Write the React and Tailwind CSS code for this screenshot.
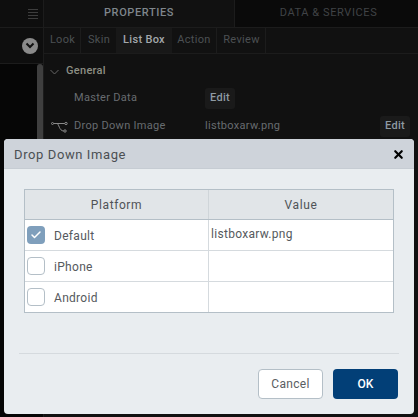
import { Check, X } from 'lucide-react';

const font = { fontFamily: 'Roboto, sans-serif' };

function Row({ label, value, checked, last }) {
  return (
    <div className={`grid grid-cols-[184px_1fr] bg-white ${last ? 'h-[30px]' : 'h-[31px] border-b border-[#d5dade]'}`}>
      <div className="flex items-center pl-[2px] border-r border-[#d5dade]">
        {checked ? (
          <span className="w-[18px] h-[18px] rounded-[4px] bg-[#7f9fbc] flex items-center justify-center">
            <Check className="w-3 h-3 text-white" strokeWidth={3} />
          </span>
        ) : (
          <span className="w-[18px] h-[18px] rounded-[4px] bg-white border border-[#b4bfc7]" />
        )}
        <span className="ml-[9px] pt-[1px] text-[12px] tracking-[0.3px] text-[#55595d]">{label}</span>
      </div>
      <div className="flex items-center pl-[2px] pb-[2px] text-[12px] tracking-[0.3px] text-[#55595d]">{value}</div>
    </div>
  );
}

export default function App() {
  return (
    <div style={font} className="relative w-[418px] h-[417px] overflow-hidden bg-[#111111] flex">
      {/* Left rail */}
      <div className="w-[44px] shrink-0 bg-[#060606] border-r border-[#1c1c1c] flex flex-col">
        <div className="h-[28px] shrink-0 flex items-center justify-end pr-[5px] bg-[#0e0e0e] border-b border-[#1c1c1c]">
          <div className="w-[10px] flex flex-col gap-[2px]">
            <span className="h-px bg-[#3d3d3d]" />
            <span className="h-px bg-[#3d3d3d]" />
            <span className="h-px bg-[#3d3d3d]" />
            <span className="h-px bg-[#3d3d3d]" />
          </div>
        </div>
        <div className="h-[36px] shrink-0 flex items-center justify-end pr-[5px] bg-[#0e0e0e] border-b border-[#1c1c1c]">
          <span className="w-4 h-4 rounded-full bg-[#8a8a8a] flex items-center justify-center">
            <svg width="10" height="7" viewBox="0 0 10 7"><path d="M1.5 1.5 5 5l3.5-3.5" fill="none" stroke="#111" strokeWidth="2" /></svg>
          </span>
        </div>
        <div className="flex justify-end">
          <span className="block w-[6px] h-[100px] rounded-t-[3px] bg-[#3f3f3f]" />
        </div>
      </div>

      {/* Properties panel */}
      <div className="flex-1 flex flex-col">
        <div className="flex h-[28px] border-b border-[#1c1c1c]">
          <div className="w-[190px] flex items-center justify-center text-[11px] font-medium tracking-[0.6px] text-[#7f868c]">PROPERTIES</div>
          <div className="flex-1 flex items-center justify-center pl-[4px] bg-[#0a0a0a] border-l border-[#1c1c1c] text-[11px] tracking-[0.6px] text-[#404346]">DATA &amp; SERVICES</div>
        </div>
        <div className="flex h-[26px] border-b border-[#1c1c1c] text-[11px] tracking-[0.3px] text-[#4c5053]">
          <div className="w-[37px] flex items-center justify-center pl-[1px] border-r border-[#1c1c1c]">Look</div>
          <div className="w-[35px] flex items-center justify-center pl-[1px]">Skin</div>
          <div className="w-[56px] flex items-center justify-center bg-[#181818] font-medium text-[#a3a8ac]">List Box</div>
          <div className="w-[45px] flex items-center justify-center border-r border-[#1c1c1c]">Action</div>
          <div className="w-[49px] flex items-center justify-center pl-[1px] border-r border-[#1c1c1c]">Review</div>
        </div>
        <div className="flex-1 text-[11px] tracking-[0.3px] text-[#686c70]">
          <div className="flex items-center h-[34px] pl-[6px] pt-[1px]">
            <svg width="9" height="6" viewBox="0 0 9 6"><path d="M.5 1 4.5 5l4-4" fill="none" stroke="#666" /></svg>
            <span className="ml-[7px] font-medium text-[#8d8f84]">General</span>
          </div>
          <div className="flex items-center h-[21px] pl-[30px]">
            <span className="w-[131px]">Master Data</span>
            <span className="h-[21px] px-[5px] rounded-[3px] bg-[#1a1a1a] flex items-center font-medium text-[#8f9ba3]">Edit</span>
          </div>
          <div className="flex items-center h-[21px] mt-[7px] pl-[7px]">
            <svg width="17" height="12" viewBox="0 0 17 12" fill="none" stroke="#8a8a8a" strokeWidth="1">
              <circle cx="1.5" cy="2.5" r="1" />
              <circle cx="15" cy="2.5" r="1.2" />
              <circle cx="14" cy="10" r="1.2" />
              <path d="M2.5 2.5H13.8M6 2.5c2 0 2 7.5 6.8 7.5" />
            </svg>
            <span className="ml-[6px] w-[131px]">Drop Down Image</span>
            <span className="w-[175px]">listboxarw.png</span>
            <span className="h-[21px] px-[5px] rounded-[3px] bg-[#1a1a1a] flex items-center font-medium text-[#8f9ba3]">Edit</span>
          </div>
        </div>
      </div>

      {/* Dialog */}
      <div className="absolute left-[4px] top-[139px] w-[410px] h-[275px] rounded-[4px] overflow-hidden bg-[#e9edf0] flex flex-col">
        <div className="h-[30px] shrink-0 flex items-center justify-between pl-[10px] pr-[9px] pt-[2px] bg-[#ced3da] border-b border-[#c6ccd3]">
          <span className="text-[13px] tracking-[0.6px] text-[#4b4f53]">Drop Down Image</span>
          <X className="w-[13px] h-[13px] text-black" strokeWidth={4} />
        </div>
        <div className="mt-[20px] mx-[20px] w-[370px] border border-[#b4bfc7]">
          <div className="grid grid-cols-[184px_1fr] h-[30px] bg-[#e1e5e8] border-b border-[#b4bfc7] text-[12px] tracking-[0.6px] text-[#4f5357]">
            <div className="flex items-center justify-center border-r border-[#cfd5d9]">Platform</div>
            <div className="flex items-center justify-center">Value</div>
          </div>
          <Row label="Default" value="listboxarw.png" checked />
          <Row label="iPhone" />
          <Row label="Android" last />
        </div>
        <div className="mt-[40px] mx-[15px] border-t border-[#d5dade]" />
        <div className="flex justify-end gap-[10px] mt-[15px] mr-[16px]">
          <button className="w-[65px] h-[30px] rounded-[4px] bg-white border border-[#b4bfc7] text-[12px] tracking-[0.3px] text-[#5a5e62]">Cancel</button>
          <button className="w-[65px] h-[30px] rounded-[4px] bg-[#023f77] text-[12px] font-medium text-white">OK</button>
        </div>
      </div>
    </div>
  );
}
